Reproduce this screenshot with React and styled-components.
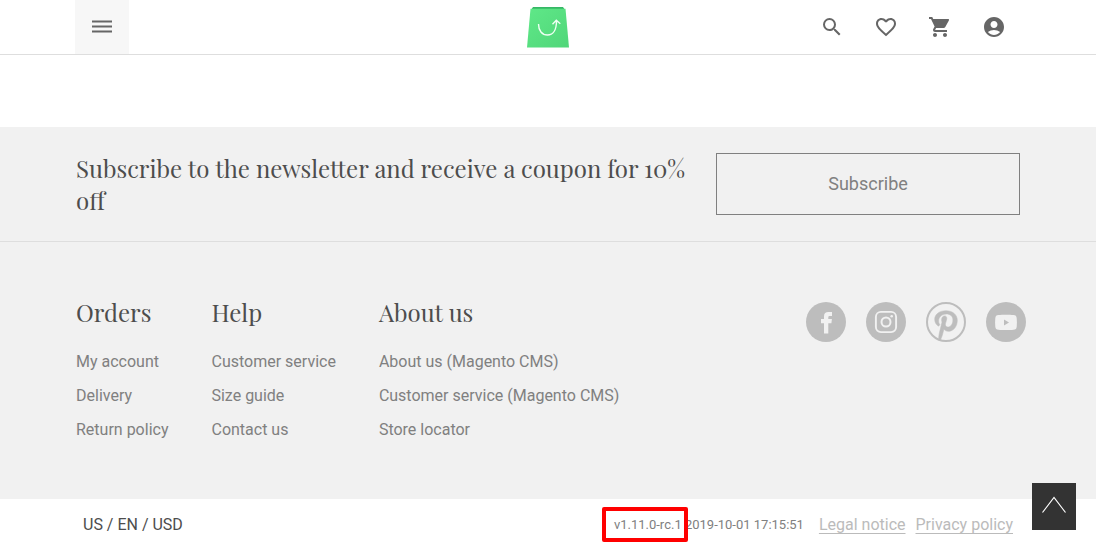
import React from "react";
import styled, { createGlobalStyle } from "styled-components";
import {
  MdSearch,
  MdFavoriteBorder,
  MdShoppingCart,
  MdAccountCircle,
} from "react-icons/md";

const serif = `"Playfair Display", "Liberation Serif", serif`;

const GlobalStyle = createGlobalStyle`
  *, *::before, *::after { box-sizing: border-box; }
  body {
    margin: 0;
    background: #fff;
    color: #4d4d4d;
    font-family: Roboto, "Liberation Sans", sans-serif;
    font-size: 16px;
    line-height: 22px;
  }
  a { color: inherit; text-decoration: none; }
`;

const Header = styled.header`
  display: grid;
  grid-template-columns: 1fr auto 1fr;
  align-items: center;
  padding: 0 75px;
  border-bottom: 1px solid #dedede;
`;

const IconButton = styled.button`
  display: flex;
  align-items: center;
  justify-content: center;
  width: 54px;
  height: 54px;
  padding: 0;
  border: 0;
  background: ${(p) => (p.$filled ? "#f7f7f7" : "transparent")};
  color: #666;
  cursor: pointer;
`;

const Actions = styled.nav`
  display: flex;
  justify-content: flex-end;
`;

const LogoLink = styled.a`
  display: flex;
`;

const Main = styled.main`
  height: 72px;
`;

const Footer = styled.footer`
  background: #f1f1f1;
`;

const Newsletter = styled.section`
  display: flex;
  align-items: center;
  justify-content: space-between;
  gap: 28px;
  padding: 25px 76px;
  border-bottom: 1px solid #dedede;
`;

const NewsletterTitle = styled.h2`
  flex: 1;
  margin: 0;
  font: 400 24px/32px ${serif};
`;

const SubscribeButton = styled.button`
  width: 304px;
  height: 62px;
  border: 1px solid #808080;
  background: transparent;
  color: #808080;
  font: 400 18px/24px Roboto, "Liberation Sans", sans-serif;
  cursor: pointer;
`;

const FooterMain = styled.section`
  display: flex;
  justify-content: space-between;
  align-items: flex-start;
  padding: 56px 70px 58px 76px;
`;

const Columns = styled.div`
  display: flex;
  gap: 43px;
`;

const ColumnTitle = styled.h3`
  margin: 0 0 25px;
  font: 400 24px/28px ${serif};
`;

const LinkList = styled.ul`
  display: flex;
  flex-direction: column;
  gap: 12px;
  margin: 0;
  padding: 0;
  list-style: none;
  color: #808080;
`;

const Social = styled.div`
  display: flex;
  gap: 20px;
  padding-top: 4px;
`;

const SocialLink = styled.a`
  display: flex;
  width: 40px;
  height: 40px;
`;

const BottomBar = styled.div`
  display: flex;
  align-items: center;
  justify-content: space-between;
  height: 51px;
  padding: 0 83px;
  background: #fff;
`;

const LocaleButton = styled.button`
  padding: 0;
  border: 0;
  background: none;
  color: #4d4d4d;
  font: inherit;
  cursor: pointer;
`;

const Legal = styled.div`
  display: flex;
  align-items: center;
  gap: 10px;
  color: #bbb;
`;

const Build = styled.span`
  margin-right: 5px;
  color: #808080;
  font-size: 13px;
`;

const Version = styled.span`
  position: relative;

  &::after {
    content: "";
    position: absolute;
    inset: -10px -6px -10px -12px;
    border: 4px solid #f00;
    border-radius: 2px;
  }
`;

const LegalLink = styled.a`
  text-decoration: underline 1px;
  text-decoration-skip-ink: none;
  text-underline-offset: 3px;
`;

const ScrollTop = styled.button`
  position: fixed;
  right: 20px;
  bottom: 20px;
  display: flex;
  align-items: center;
  justify-content: center;
  width: 44px;
  height: 47px;
  padding: 0 0 3px;
  border: 0;
  background: #333;
  cursor: pointer;
`;

const MenuIcon = () => (
  <svg width="20" height="18" viewBox="0 0 20 18" aria-hidden="true">
    <path d="M0 3.500h20M0 8.500h20M0 13.500h20" stroke="currentColor" strokeWidth="2" />
  </svg>
);

const Logo = () => (
  <svg width="42" height="42" viewBox="0 0 42 42" aria-hidden="true">
    <defs>
      <linearGradient id="bag" x1="0" y1="0" x2="1" y2="1">
        <stop offset="0" stopColor="#5fe888" />
        <stop offset="1" stopColor="#50d679" />
      </linearGradient>
    </defs>
    <path d="M6 1h30l2 3H4z" fill="#35b865" />
    <path d="M3.500 2.700h35L42 41.500H0z" fill="url(#bag)" />
    <path
      d="M11.500 18c0 6.500 3.500 11 9 11s9-5 9-14M25.500 18.200l3.800-3.900 4 3.400"
      fill="none"
      stroke="#effff3"
      strokeWidth="1.400"
    />
  </svg>
);

const FacebookIcon = () => (
  <svg width="40" height="40" viewBox="0 0 40 40" aria-hidden="true">
    <circle cx="20" cy="20" r="20" fill="#bdbdbd" />
    <path
      d="M18 31.500V21.200h-3V17h3v-2.800c0-2.800 1.700-4.200 4.300-4.200H26v4.100h-2.300c-1.100 0-1.400.5-1.400 1.500V17h3.600l-.5 4.200h-3.100v10.300z"
      fill="#f1f1f1"
    />
  </svg>
);

const InstagramIcon = () => (
  <svg width="40" height="40" viewBox="0 0 40 40" aria-hidden="true">
    <circle cx="20" cy="20" r="20" fill="#bdbdbd" />
    <rect x="9.900" y="9.900" width="20.200" height="20.200" rx="5" fill="none" stroke="#f1f1f1" strokeWidth="1.900" />
    <circle cx="20" cy="20" r="4.500" fill="none" stroke="#f1f1f1" strokeWidth="2" />
    <circle cx="25.700" cy="14.300" r="1.300" fill="#f1f1f1" />
  </svg>
);

const PinterestIcon = () => (
  <svg width="40" height="40" viewBox="0 0 40 40" aria-hidden="true">
    <circle cx="20" cy="20" r="19" fill="none" stroke="#bdbdbd" strokeWidth="2" />
    <path
      d="M12.500 24.200C9.900 22.500 8.700 20 8.700 17.200 8.700 12.700 13 8.700 20 8.700c6.800 0 11.300 4.200 11.300 9.500 0 6.500-4 11.100-9 11.100-1.900 0-3.700-.9-4.400-2.200l-1.300 5.200c-.5 2-1.400 4.200-2.300 6l-1.600-.6c-.1-2 .1-4.200.5-6l2.800-11.600c-.3-.8-.4-1.500-.4-2.300 0-2.300 1.300-3.900 3-3.900 1.500 0 2.200 1.100 2.200 2.400 0 1.500-.9 3.500-1.400 5.500-.4 1.800.7 3.200 2.500 3.200 2.900 0 5-3.100 5-7.100 0-3.400-2.400-5.900-6.600-5.900-4.800 0-7.700 3.500-7.700 7.100 0 1.500.4 2.600 1.300 3.600z"
      fill="#bdbdbd"
      stroke="#bdbdbd"
      strokeWidth="0.500"
    />
  </svg>
);

const YoutubeIcon = () => (
  <svg width="40" height="40" viewBox="0 0 40 40" aria-hidden="true">
    <circle cx="20" cy="20" r="20" fill="#bdbdbd" />
    <path
      d="M12.500 13c4-.5 11-.5 15 0 2.200.2 2.900 1 3.200 3.200.3 2.800.3 5.800 0 8.500-.3 2.200-1 2.900-3.200 3.100-4 .4-11 .4-15 0-2.200-.2-2.900-1-3.200-3.100-.3-2.800-.3-5.800 0-8.500.3-2.200 1-3 3.200-3.200z"
      fill="#f1f1f1"
    />
    <path d="M18 17.600v5.800l5-2.900z" fill="#bdbdbd" />
  </svg>
);

const actions = [
  ["Search", MdSearch],
  ["Wishlist", MdFavoriteBorder],
  ["Cart", MdShoppingCart],
  ["Account", MdAccountCircle],
];

const columns = [
  ["Orders", ["My account", "Delivery", "Return policy"]],
  ["Help", ["Customer service", "Size guide", "Contact us"]],
  ["About us", ["About us (Magento CMS)", "Customer service (Magento CMS)", "Store locator"]],
];

const socials = [
  ["Facebook", FacebookIcon],
  ["Instagram", InstagramIcon],
  ["Pinterest", PinterestIcon],
  ["YouTube", YoutubeIcon],
];

export default function App() {
  return (
    <>
      <GlobalStyle />
      <Header>
        <IconButton $filled aria-label="Menu">
          <MenuIcon />
        </IconButton>
        <LogoLink href="#" aria-label="Home">
          <Logo />
        </LogoLink>
        <Actions>
          {actions.map(([label, Icon]) => (
            <IconButton key={label} aria-label={label}>
              <Icon size={24} />
            </IconButton>
          ))}
        </Actions>
      </Header>
      <Main />
      <Footer>
        <Newsletter>
          <NewsletterTitle>
            Subscribe to the newsletter and receive a coupon for 10% off
          </NewsletterTitle>
          <SubscribeButton>Subscribe</SubscribeButton>
        </Newsletter>
        <FooterMain>
          <Columns>
            {columns.map(([title, links]) => (
              <div key={title}>
                <ColumnTitle>{title}</ColumnTitle>
                <LinkList>
                  {links.map((link) => (
                    <li key={link}>
                      <a href="#">{link}</a>
                    </li>
                  ))}
                </LinkList>
              </div>
            ))}
          </Columns>
          <Social>
            {socials.map(([label, Icon]) => (
              <SocialLink key={label} href="#" aria-label={label}>
                <Icon />
              </SocialLink>
            ))}
          </Social>
        </FooterMain>
        <BottomBar>
          <LocaleButton>US / EN / USD</LocaleButton>
          <Legal>
            <Build>
              <Version>v1.11.0-rc.1</Version> 2019-10-01 17:15:51
            </Build>
            <LegalLink href="#">Legal notice</LegalLink>
            <LegalLink href="#">Privacy policy</LegalLink>
          </Legal>
        </BottomBar>
      </Footer>
      <ScrollTop aria-label="Back to top">
        <svg width="26" height="18" viewBox="0 0 26 18" aria-hidden="true">
          <path d="M1.500 16.500 13 1.500l11.500 15" fill="none" stroke="#fff" strokeWidth="1.200" />
        </svg>
      </ScrollTop>
    </>
  );
}
